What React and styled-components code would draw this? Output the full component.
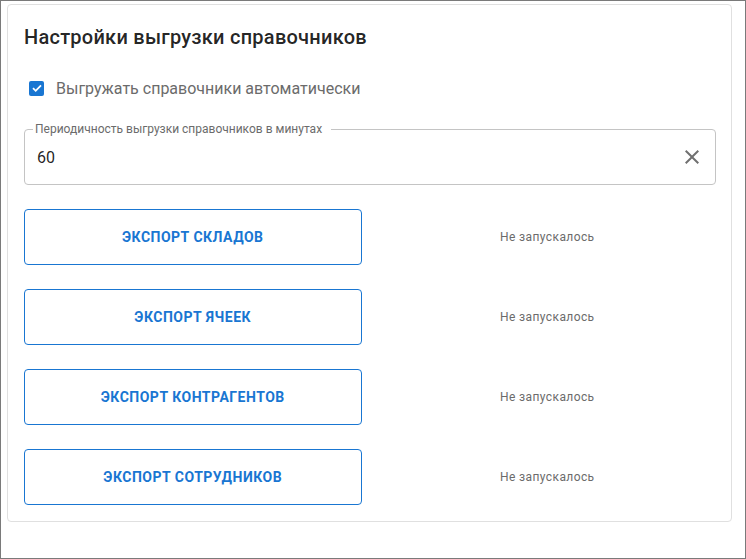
import styled, { createGlobalStyle } from "styled-components";

const GlobalStyle = createGlobalStyle`
    html, body {
        margin: 0;
        padding: 0;
        background: #fff;
    }
    body {
        font-family: Roboto, "Liberation Sans", Arial, sans-serif;
    }
`

const exports = [
    { title: "Экспорт складов", status: "Не запускалось" },
    { title: "Экспорт ячеек", status: "Не запускалось" },
    { title: "Экспорт контрагентов", status: "Не запускалось" },
    { title: "Экспорт сотрудников", status: "Не запускалось" },
]

export default function App() {
    return (
        <Frame>
            <GlobalStyle />
            <Card>
                <Title>Настройки выгрузки справочников</Title>
                <CheckRow>
                    <CheckBox>
                        <svg width="12" height="12" viewBox="0 0 12 12">
                            <path d="M2 6.2 4.7 8.8 10 3.4" fill="none" stroke="#fff" strokeWidth="1.8" />
                        </svg>
                    </CheckBox>
                    <CheckLabel>Выгружать справочники автоматически</CheckLabel>
                </CheckRow>
                <Field>
                    <Legend>Периодичность выгрузки справочников в минутах</Legend>
                    <FieldRow>
                        <Value>60</Value>
                        <ClearButton>
                            <svg width="24" height="24" viewBox="0 0 24 24">
                                <path
                                    fill="#707070"
                                    d="M19 6.41 17.59 5 12 10.59 6.41 5 5 6.41 10.59 12 5 17.59 6.41 19 12 13.41 17.59 19 19 17.59 13.41 12z"
                                />
                            </svg>
                        </ClearButton>
                    </FieldRow>
                </Field>
                <ExportGrid>
                    {exports.map(item => (
                        <Row key={item.title}>
                            <ExportButton>{item.title}</ExportButton>
                            <Status>{item.status}</Status>
                        </Row>
                    ))}
                </ExportGrid>
            </Card>
        </Frame>
    )
}

const Frame = styled.div`
    box-sizing: border-box;
    width: 746px;
    height: 559px;
    border: 1px solid #7a7a7a;
    padding: 3px 13px 0 6px;
`

const Card = styled.div`
    border: 1px solid #e0e0e0;
    border-radius: 4px;
    padding: 16px 15px 16px 16px;
`

const Title = styled.h2`
    margin: 0;
    font-size: 20px;
    line-height: 32px;
    font-weight: 500;
    letter-spacing: 0.25px;
    color: rgba(0, 0, 0, 0.87);
`

const CheckRow = styled.label`
    display: flex;
    align-items: center;
    height: 40px;
    margin-top: 15px;
    padding-left: 5px;
`

const CheckBox = styled.span`
    width: 15px;
    height: 15px;
    border-radius: 2px;
    background: #1976d2;
    display: flex;
    align-items: center;
    justify-content: center;
    margin-right: 12px;
`

const CheckLabel = styled.span`
    font-size: 16px;
    color: #6b6b6b;
`

const Field = styled.fieldset`
    margin: 14px 0 0 0;
    padding: 0 11px 6px 12px;
    border: 1px solid #c4c4c4;
    border-radius: 4px;
`

const Legend = styled.legend`
    margin-left: -4px;
    padding: 0 9px 0 2px;
    font-size: 12px;
    line-height: 14px;
    color: #6b6b6b;
`

const FieldRow = styled.div`
    display: flex;
    align-items: center;
    height: 42px;
`

const Value = styled.div`
    flex: 1;
    font-size: 16px;
    color: rgba(0, 0, 0, 0.87);
`

const ClearButton = styled.span`
    display: flex;
    width: 24px;
    height: 24px;
`

const ExportGrid = styled.div`
    display: grid;
    row-gap: 24px;
    margin-top: 24px;
`

const Row = styled.div`
    display: grid;
    grid-template-columns: 1fr 1fr;
    column-gap: 17px;
    align-items: center;
`

const ExportButton = styled.button`
    height: 56px;
    border: 1px solid #1976d2;
    border-radius: 4px;
    background: #fff;
    color: #1976d2;
    font-family: Roboto, "Liberation Sans", Arial, sans-serif;
    font-size: 14px;
    font-weight: 700;
    letter-spacing: 0.5px;
    text-transform: uppercase;
    cursor: pointer;
`

const Status = styled.div`
    text-align: center;
    font-size: 12px;
    letter-spacing: 0.4px;
    color: #6b6b6b;
`
